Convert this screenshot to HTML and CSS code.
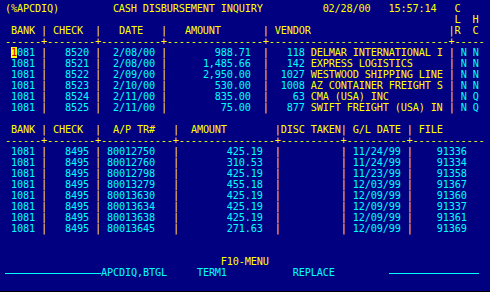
FILE: index.html
```html
<!DOCTYPE html>
<html lang="en">
<head>
    <meta charset="UTF-8">
    <meta name="viewport" content="width=device-width, initial-scale=1.0">
    <title>Cash Disbursement Inquiry</title>
    <link rel="stylesheet" href="styles.css">
</head>
<body>
    <div class="screen">
        <!-- Kopfzeile -->
        <div class="row"><span>(%APCDIQ)</span>         <span>CASH DISBURSEMENT INQUIRY</span>          <span>02/28/00</span>   <span>15:57:14</span>   <span>C</span></div>
        <div class="row">                                                                           <span>L</span>  <span>H</span></div>
        <div class="row"> <span>BANK</span> <span>|</span> <span>CHECK</span>  <span>|</span>   <span>DATE</span>   <span>|</span>   <span>AMOUNT</span>       <span>|</span> <span>VENDOR</span>                       <span>|R</span>  <span>C</span></div>
        <div class="row"><span>------+--------+----------+----------------+------------------------------+-----</span></div>

        <!-- Schecks -->
        <div class="row"> <span class="cur">1</span><span class="c">081</span> <span>|</span>   <span class="c">8520</span> <span>|</span>  <span class="c">2/08/00</span> <span>|</span>        <span class="c">988.71</span>  <span>|</span>   <span class="c">118</span> <span>DELMAR INTERNATIONAL I</span> <span>|</span> <span class="c">N</span> <span class="c">N</span></div>
        <div class="row"> <span class="c">1081</span> <span>|</span>   <span class="c">8521</span> <span>|</span>  <span class="c">2/08/00</span> <span>|</span>      <span class="c">1,485.66</span>  <span>|</span>   <span class="c">142</span> <span>EXPRESS LOGISTICS</span>      <span>|</span> <span class="c">N</span> <span class="c">N</span></div>
        <div class="row"> <span class="c">1081</span> <span>|</span>   <span class="c">8522</span> <span>|</span>  <span class="c">2/09/00</span> <span>|</span>      <span class="c">2,950.00</span>  <span>|</span>  <span class="c">1027</span> <span>WESTWOOD SHIPPING LINE</span> <span>|</span> <span class="c">N</span> <span class="c">N</span></div>
        <div class="row"> <span class="c">1081</span> <span>|</span>   <span class="c">8523</span> <span>|</span>  <span class="c">2/10/00</span> <span>|</span>        <span class="c">530.00</span>  <span>|</span>  <span class="c">1008</span> <span>AZ CONTAINER FREIGHT S</span> <span>|</span> <span class="c">N</span> <span class="c">N</span></div>
        <div class="row"> <span class="c">1081</span> <span>|</span>   <span class="c">8524</span> <span>|</span>  <span class="c">2/11/00</span> <span>|</span>        <span class="c">835.00</span>  <span>|</span>    <span class="c">63</span> <span>CMA (USA) INC</span>          <span>|</span> <span class="c">N</span> <span class="c">Q</span></div>
        <div class="row"> <span class="c">1081</span> <span>|</span>   <span class="c">8525</span> <span>|</span>  <span class="c">2/11/00</span> <span>|</span>         <span class="c">75.00</span>  <span>|</span>   <span class="c">877</span> <span>SWIFT FREIGHT (USA) IN</span> <span>|</span> <span class="c">N</span> <span class="c">Q</span></div>
        <div class="row"> </div>

        <!-- Rechnungen -->
        <div class="row"> <span>BANK</span> <span>|</span> <span>CHECK</span>  <span>|</span>  <span>A/P TR#</span>   <span>|</span>  <span>AMOUNT</span>        <span>|DISC TAKEN|</span> <span>G/L DATE</span> <span>|</span> <span>FILE</span></div>
        <div class="row"><span>------+--------+------------+----------------+----------+----------+------------</span></div>
        <div class="row"> <span class="c">1081</span> <span>|</span>   <span class="c">8495</span> <span>|</span> <span class="c">80012750</span>   <span>|</span>        <span class="c">425.19</span>  <span>|</span>          <span>|</span> <span class="c">11/24/99</span> <span>|</span>    <span class="c">91336</span></div>
        <div class="row"> <span class="c">1081</span> <span>|</span>   <span class="c">8495</span> <span>|</span> <span class="c">80012760</span>   <span>|</span>        <span class="c">310.53</span>  <span>|</span>          <span>|</span> <span class="c">11/24/99</span> <span>|</span>    <span class="c">91334</span></div>
        <div class="row"> <span class="c">1081</span> <span>|</span>   <span class="c">8495</span> <span>|</span> <span class="c">80012798</span>   <span>|</span>        <span class="c">425.19</span>  <span>|</span>          <span>|</span> <span class="c">11/23/99</span> <span>|</span>    <span class="c">91358</span></div>
        <div class="row"> <span class="c">1081</span> <span>|</span>   <span class="c">8495</span> <span>|</span> <span class="c">80013279</span>   <span>|</span>        <span class="c">455.18</span>  <span>|</span>          <span>|</span> <span class="c">12/03/99</span> <span>|</span>    <span class="c">91367</span></div>
        <div class="row"> <span class="c">1081</span> <span>|</span>   <span class="c">8495</span> <span>|</span> <span class="c">80013630</span>   <span>|</span>        <span class="c">425.19</span>  <span>|</span>          <span>|</span> <span class="c">12/09/99</span> <span>|</span>    <span class="c">91360</span></div>
        <div class="row"> <span class="c">1081</span> <span>|</span>   <span class="c">8495</span> <span>|</span> <span class="c">80013634</span>   <span>|</span>        <span class="c">425.19</span>  <span>|</span>          <span>|</span> <span class="c">12/09/99</span> <span>|</span>    <span class="c">91337</span></div>
        <div class="row"> <span class="c">1081</span> <span>|</span>   <span class="c">8495</span> <span>|</span> <span class="c">80013638</span>   <span>|</span>        <span class="c">425.19</span>  <span>|</span>          <span>|</span> <span class="c">12/09/99</span> <span>|</span>    <span class="c">91361</span></div>
        <div class="row"> <span class="c">1081</span> <span>|</span>   <span class="c">8495</span> <span>|</span> <span class="c">80013645</span>   <span>|</span>        <span class="c">271.63</span>  <span>|</span>          <span>|</span> <span class="c">12/09/99</span> <span>|</span>    <span class="c">91369</span></div>
        <div class="row"> </div>
        <div class="row"> </div>

        <!-- Statuszeile -->
        <div class="row">                                    <span>F10-MENU</span></div>
        <div class="row"><span class="rule rule-left"></span><span class="c">APCDIQ,BTGL</span>     <span class="c">TERM1</span>           <span class="c">REPLACE</span>         <span class="rule rule-right"></span></div>
    </div>
</body>
</html>
```

FILE: styles.css
```css
body {
    margin: 0;
    background-color: #000;
}

.screen {
    height: 291px;
    padding: 3px 0 0 5px;
    box-sizing: border-box;
    background-color: #000080;
    color: #ffff00;
    font-family: 'DejaVu Sans Mono', monospace;
    font-size: 10.2px;
    letter-spacing: -0.141px;
}

.row {
    height: 11px;
    line-height: 11px;
    white-space: pre;
}

.c {
    color: #00ffff;
}

.cur {
    display: inline-block;
    width: 6px;
    height: 11px;
    vertical-align: top;
    background-color: #ffff00;
    color: #e00000;
}

.rule {
    display: inline-block;
    height: 1px;
    vertical-align: middle;
    background-color: #00ffff;
}

.rule-left {
    width: 96px;
}

.rule-right {
    width: 90px;
}
```
